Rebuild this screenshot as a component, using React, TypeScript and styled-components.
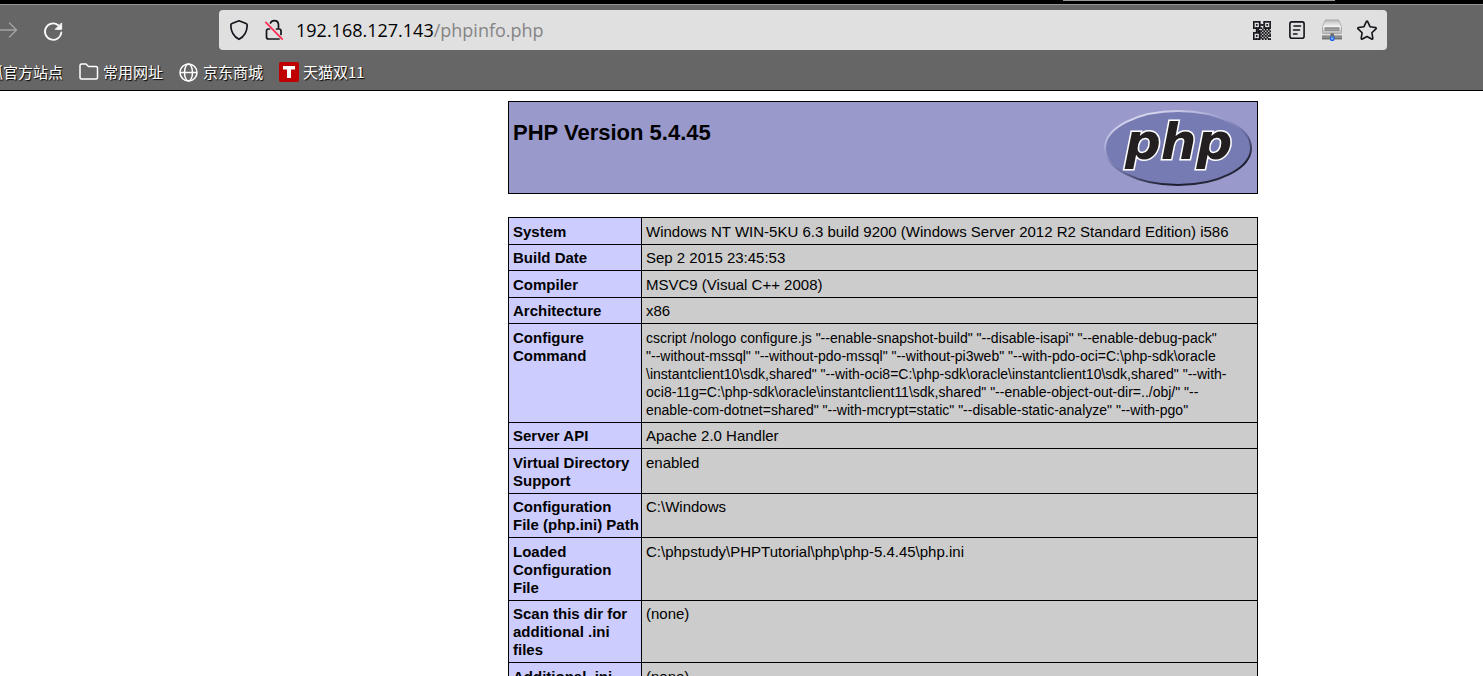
import React from 'react';
import styled, { createGlobalStyle } from 'styled-components';

const GlobalStyle = createGlobalStyle`
  *, *::before, *::after { box-sizing: border-box; }
  html, body, #root { height: 100%; }
  body {
    margin: 0;
    background: #fff;
    color: #000;
    font-family: "Liberation Sans", Arial, sans-serif;
    overflow: hidden;
  }
`;

const Window = styled.div`
  display: flex;
  flex-direction: column;
  height: 100%;
  overflow: hidden;
`;

const TabStrip = styled.div`
  flex: none;
  display: flex;
  justify-content: flex-end;
  height: 4px;
  padding-right: 148px;
  background: #000;
`;

const ActiveTabEdge = styled.div`
  width: 272px;
  height: 1px;
  background: #999;
`;

const Chrome = styled.header`
  flex: none;
  display: flex;
  flex-direction: column;
  background: #666;
  border-top: 1px solid #959595;
  border-bottom: 1px solid #000;
`;

const Toolbar = styled.div`
  display: flex;
  align-items: center;
  padding: 5px 96px 5px 0;
`;

const IconButton = styled.button`
  flex: none;
  display: flex;
  align-items: center;
  justify-content: center;
  width: 20px;
  height: 24px;
  padding: 0;
  border: 0;
  background: none;
  color: inherit;
`;

const NavButtons = styled.div`
  flex: none;
  display: flex;
  gap: 23px;
  width: 219px;
  padding-top: 2px;
  color: #f9f9fa;
`;

const AddressBar = styled.form`
  flex: 1;
  min-width: 0;
  display: flex;
  align-items: center;
  gap: 15px;
  height: 40px;
  padding: 0 10px;
  border-radius: 4px;
  background: #e0e0e0;
  color: #15141a;
`;

const Address = styled.label`
  flex: 1;
  min-width: 0;
  display: flex;
  align-items: center;
  margin-left: -3px;
  overflow: hidden;
  font: 18px/24px "Open Sans", "Noto Sans", sans-serif;
`;

const HostInput = styled.input`
  field-sizing: content;
  height: 24px;
  padding: 0;
  border: 0;
  outline: 0;
  background: none;
  color: #000;
  font: inherit;
`;

const Path = styled.span`
  color: #858585;
`;

const Bookmarks = styled.nav`
  display: flex;
  align-items: center;
  gap: 16px;
  height: 35px;
  padding-bottom: 2px;
  overflow: hidden;
`;

const Bookmark = styled.a<{ $cut?: boolean }>`
  flex: none;
  display: flex;
  align-items: center;
  justify-content: flex-end;
  gap: 4px;
  width: ${(p) => (p.$cut ? '63px' : 'auto')};
  overflow: ${(p) => (p.$cut ? 'hidden' : 'visible')};
  color: #fff;
  font: 15px/24px "Noto Sans CJK SC", sans-serif;
  text-decoration: none;
  text-shadow: 1px 1px 1px #000;
  white-space: nowrap;
`;

const Page = styled.main`
  flex: 1;
  min-height: 0;
  display: flex;
  flex-direction: column;
  align-items: center;
  padding: 10px 0 0 283px;
  overflow: hidden;
`;

const Banner = styled.section`
  flex: none;
  display: flex;
  justify-content: space-between;
  width: 100%;
  max-width: 750px;
  padding: 4px;
  border: 1px solid #000;
  background: #9999cc;
`;

const Title = styled.h1`
  margin: 14px 0 0;
  font-size: 22px;
  line-height: 26px;
  font-weight: 700;
`;

const InfoTable = styled.table`
  width: 100%;
  max-width: 750px;
  margin-top: 23px;
  border-collapse: collapse;
  table-layout: fixed;
  font-size: 15px;
  line-height: 18px;

  th, td {
    padding: 5px 0 3px 4px;
    border: 1px solid #000;
    text-align: left;
    vertical-align: top;
  }

  tr:nth-child(even) > * {
    padding-top: 4px;
  }
`;

const NameCell = styled.th`
  width: 133px;
  background: #ccccff;
  font-weight: 700;
  white-space: pre-line;
`;

const ValueCell = styled.td<{ $long: boolean }>`
  background: #cccccc;
  font-size: ${(p) => (p.$long ? '14px' : '15px')};
  white-space: pre-line;
`;

const ForwardIcon = () => (
  <svg width="20" height="24" viewBox="0 0 20 24" fill="none" stroke="#a3a3a3" strokeWidth="1.4" strokeLinecap="round" strokeLinejoin="round">
    <path d="M0 11h16M9.500 4l7 7-7 7" />
  </svg>
);

const ReloadIcon = () => (
  <svg width="20" height="24" viewBox="0 0 20 24" fill="none" stroke="currentColor" strokeWidth="1.8" strokeLinecap="round">
    <path d="M18.300 13.500A8.200 8.200 0 1 1 15.300 6.200" />
    <path d="M18.600 4.300v6h-6z" fill="currentColor" strokeWidth="1" strokeLinejoin="round" />
  </svg>
);

const ShieldIcon = () => (
  <svg width="20" height="22" viewBox="0 0 20 22" fill="none" stroke="currentColor" strokeWidth="1.700" strokeLinejoin="round">
    <path d="M10 1.800L17 4.500Q18.300 5 18.200 6.500C18 13 15.500 17.500 10 20.300C4.500 17.500 2 13 1.800 6.500Q1.700 5 3 4.500Z" />
  </svg>
);

const InsecureLockIcon = () => (
  <svg width="20" height="22" viewBox="0 0 20 22" fill="none" strokeLinecap="round">
    <g stroke="currentColor" strokeWidth="1.700">
      <path d="M6.500 4C7.300 2.300 8.500 1.600 10.200 1.600C13 1.600 14.500 3.600 14.500 6V9" />
      <path d="M12.500 10H15Q17 10 17 12V15.500" />
      <path d="M5.500 10H4.500Q2.500 10 2.500 12V18Q2.500 20 4.500 20H15" />
    </g>
    <path d="M1.800 3.300L18.200 20.200" stroke="#ff2850" strokeWidth="1.700" />
  </svg>
);

const QR_ROWS = [
  '111110011111',
  '100010010001',
  '101011110101',
  '100010010001',
  '111111011111',
  '001100101010',
  '001111010101',
  '111110101010',
  '100011010101',
  '101010101011',
  '100011010100',
  '111110101011',
];

const QrIcon = () => (
  <svg width="18" height="19" viewBox="0 0 12 12" preserveAspectRatio="none" fill="currentColor" stroke="currentColor" strokeWidth=".15">
    {QR_ROWS.flatMap((row, y) =>
      row.split('').map((c, x) => (c === '1' ? <rect key={`${x}-${y}`} x={x} y={y} width="1" height="1" /> : null)),
    )}
  </svg>
);

const ReaderIcon = () => (
  <svg width="20" height="22" viewBox="0 0 20 22" fill="none" stroke="currentColor" strokeWidth="1.600" strokeLinecap="round">
    <rect x="2.900" y="2.900" width="14.200" height="16.400" rx="2" />
    <path d="M7 7h6.500M6.500 11h6M6.500 15h3.500" />
  </svg>
);

const DriveIcon = () => (
  <svg width="20" height="22" viewBox="0 0 20 22">
    <defs>
      <linearGradient id="drive" x1="0" y1="0" x2="0" y2="1">
        <stop offset="0" stopColor="#b8b8b8" />
        <stop offset="0.300" stopColor="#dedede" />
        <stop offset="0.500" stopColor="#f4f4f4" />
        <stop offset="1" stopColor="#b4b4b4" />
      </linearGradient>
    </defs>
    <path d="M3.500 1h13l3 6.500v6q0 1-1 1h-17q-1 0-1-1v-6z" fill="url(#drive)" stroke="#a0a0a0" strokeWidth=".8" />
    <path d="M2.500 8h15v4h-15z" fill="#a2a2a2" />
    <path d="M2.500 9.500h15M2.500 11.500h15" stroke="#858585" strokeWidth=".7" />
    <path d="M8.500 14.500h3.500v3H8.500z" fill="#666" />
    <path d="M0 16.500h20v4H0z" fill="#747474" />
    <path d="M0 18h20" stroke="#a8a8a8" strokeWidth=".9" />
    <path d="M8 17.500h4.500v3.500l-1 1h-2.500l-1-1z" fill="#1f62dd" />
    <circle cx="10.200" cy="19.500" r="1.200" fill="#7fb4ff" />
  </svg>
);

const StarIcon = () => (
  <svg width="20" height="22" viewBox="0 0 20 22" fill="none" stroke="currentColor" strokeWidth="1.600" strokeLinejoin="round">
    <path d="M9.300 2.600Q10 1.600 10.700 2.600L13 7.700L18.500 8.500Q19.700 9 18.900 9.900L14.900 13.800L15.800 19.200Q15.700 20.500 14.600 20L10 17.500L5.400 20Q4.300 20.500 4.200 19.200L5.100 13.800L1.100 9.900Q.3 9 1.500 8.500L7 7.700Z" />
  </svg>
);

const FolderIcon = () => (
  <svg width="20" height="20" viewBox="0 0 20 20" fill="none" stroke="currentColor" strokeWidth="1.500" strokeLinejoin="round">
    <path d="M1 15.500V3.500Q1 2 2.500 2H7L9.500 4.500H17Q18.500 4.500 18.500 6V15.500Q18.500 17 17 17H2.500Q1 17 1 15.500Z" />
  </svg>
);

const GlobeIcon = () => (
  <svg width="20" height="20" viewBox="0 0 20 20" fill="none" stroke="currentColor" strokeWidth="1.500">
    <circle cx="9.500" cy="10.500" r="8.500" />
    <ellipse cx="9.500" cy="10.500" rx="4" ry="8.500" />
    <path d="M1 10.500h17" />
  </svg>
);

const TmallIcon = () => (
  <svg width="20" height="20" viewBox="0 0 20 20">
    <rect width="20" height="20" rx="2" fill="#bf0000" />
    <path d="M4 4h12v3.500h-4V16H8V7.500H4z" fill="#fff" />
  </svg>
);

const LogoWord = styled.text`
  font: italic 700 50px "DejaVu Sans", sans-serif;
`;

const PhpLogo = () => (
  <svg width="150" height="83" viewBox="0 0 150 83" role="img" aria-label="PHP logo">
    <defs>
      <linearGradient id="rim" x1="0.200" y1="0" x2="0.800" y2="1">
        <stop offset="0" stopColor="#e4e4f4" />
        <stop offset="0.300" stopColor="#a3a5d2" />
        <stop offset="0.550" stopColor="#6a6da0" />
        <stop offset="0.850" stopColor="#1b1b2a" />
        <stop offset="1" stopColor="#33354e" />
      </linearGradient>
    </defs>
    <ellipse cx="75" cy="42" rx="73" ry="37" fill="#777bb3" stroke="url(#rim)" strokeWidth="2" />
    <LogoWord x="22" y="53" fill="#231f20" stroke="#fff" strokeWidth="3" paintOrder="stroke">
      php
    </LogoWord>
  </svg>
);

const INFO: [string, string][] = [
  ['System', 'Windows NT WIN-5KU 6.3 build 9200 (Windows Server 2012 R2 Standard Edition) i586'],
  ['Build Date', 'Sep 2 2015 23:45:53'],
  ['Compiler', 'MSVC9 (Visual C++ 2008)'],
  ['Architecture', 'x86'],
  [
    'Configure\nCommand',
    [
      'cscript /nologo configure.js "--enable-snapshot-build" "--disable-isapi" "--enable-debug-pack"',
      '"--without-mssql" "--without-pdo-mssql" "--without-pi3web" "--with-pdo-oci=C:\\php-sdk\\oracle',
      '\\instantclient10\\sdk,shared" "--with-oci8=C:\\php-sdk\\oracle\\instantclient10\\sdk,shared" "--with-',
      'oci8-11g=C:\\php-sdk\\oracle\\instantclient11\\sdk,shared" "--enable-object-out-dir=../obj/" "--',
      'enable-com-dotnet=shared" "--with-mcrypt=static" "--disable-static-analyze" "--with-pgo"',
    ].join('\n'),
  ],
  ['Server API', 'Apache 2.0 Handler'],
  ['Virtual Directory Support', 'enabled'],
  ['Configuration\nFile (php.ini) Path', 'C:\\Windows'],
  ['Loaded\nConfiguration\nFile', 'C:\\phpstudy\\PHPTutorial\\php\\php-5.4.45\\php.ini'],
  ['Scan this dir for\nadditional .ini\nfiles', '(none)'],
  ['Additional .ini\nfiles parsed', '(none)'],
];

export default function App() {
  return (
    <>
      <GlobalStyle />
      <Window>
        <TabStrip>
          <ActiveTabEdge />
        </TabStrip>
        <Chrome>
          <Toolbar>
            <NavButtons>
              <IconButton type="button" aria-label="Forward" disabled>
                <ForwardIcon />
              </IconButton>
              <IconButton type="button" aria-label="Reload">
                <ReloadIcon />
              </IconButton>
            </NavButtons>
            <AddressBar onSubmit={(e) => e.preventDefault()}>
              <IconButton type="button" aria-label="Tracking protection">
                <ShieldIcon />
              </IconButton>
              <IconButton type="button" aria-label="Connection is not secure">
                <InsecureLockIcon />
              </IconButton>
              <Address>
                <HostInput type="text" aria-label="Address" defaultValue="192.168.127.143" spellCheck={false} />
                <Path>/phpinfo.php</Path>
              </Address>
              <IconButton type="button" aria-label="QR code">
                <QrIcon />
              </IconButton>
              <IconButton type="button" aria-label="Reader view">
                <ReaderIcon />
              </IconButton>
              <IconButton type="button" aria-label="Network drive">
                <DriveIcon />
              </IconButton>
              <IconButton type="button" aria-label="Bookmark this page">
                <StarIcon />
              </IconButton>
            </AddressBar>
          </Toolbar>
          <Bookmarks aria-label="Bookmarks">
            <Bookmark href="#" $cut>
              火狐官方站点
            </Bookmark>
            <Bookmark href="#">
              <FolderIcon />
              常用网址
            </Bookmark>
            <Bookmark href="#">
              <GlobeIcon />
              京东商城
            </Bookmark>
            <Bookmark href="#">
              <TmallIcon />
              天猫双11
            </Bookmark>
          </Bookmarks>
        </Chrome>
        <Page>
          <Banner>
            <Title>PHP Version 5.4.45</Title>
            <PhpLogo />
          </Banner>
          <InfoTable>
            <tbody>
              {INFO.map(([name, value]) => (
                <tr key={name}>
                  <NameCell scope="row">{name}</NameCell>
                  <ValueCell $long={value.includes('\n')}>{value}</ValueCell>
                </tr>
              ))}
            </tbody>
          </InfoTable>
        </Page>
      </Window>
    </>
  );
}
